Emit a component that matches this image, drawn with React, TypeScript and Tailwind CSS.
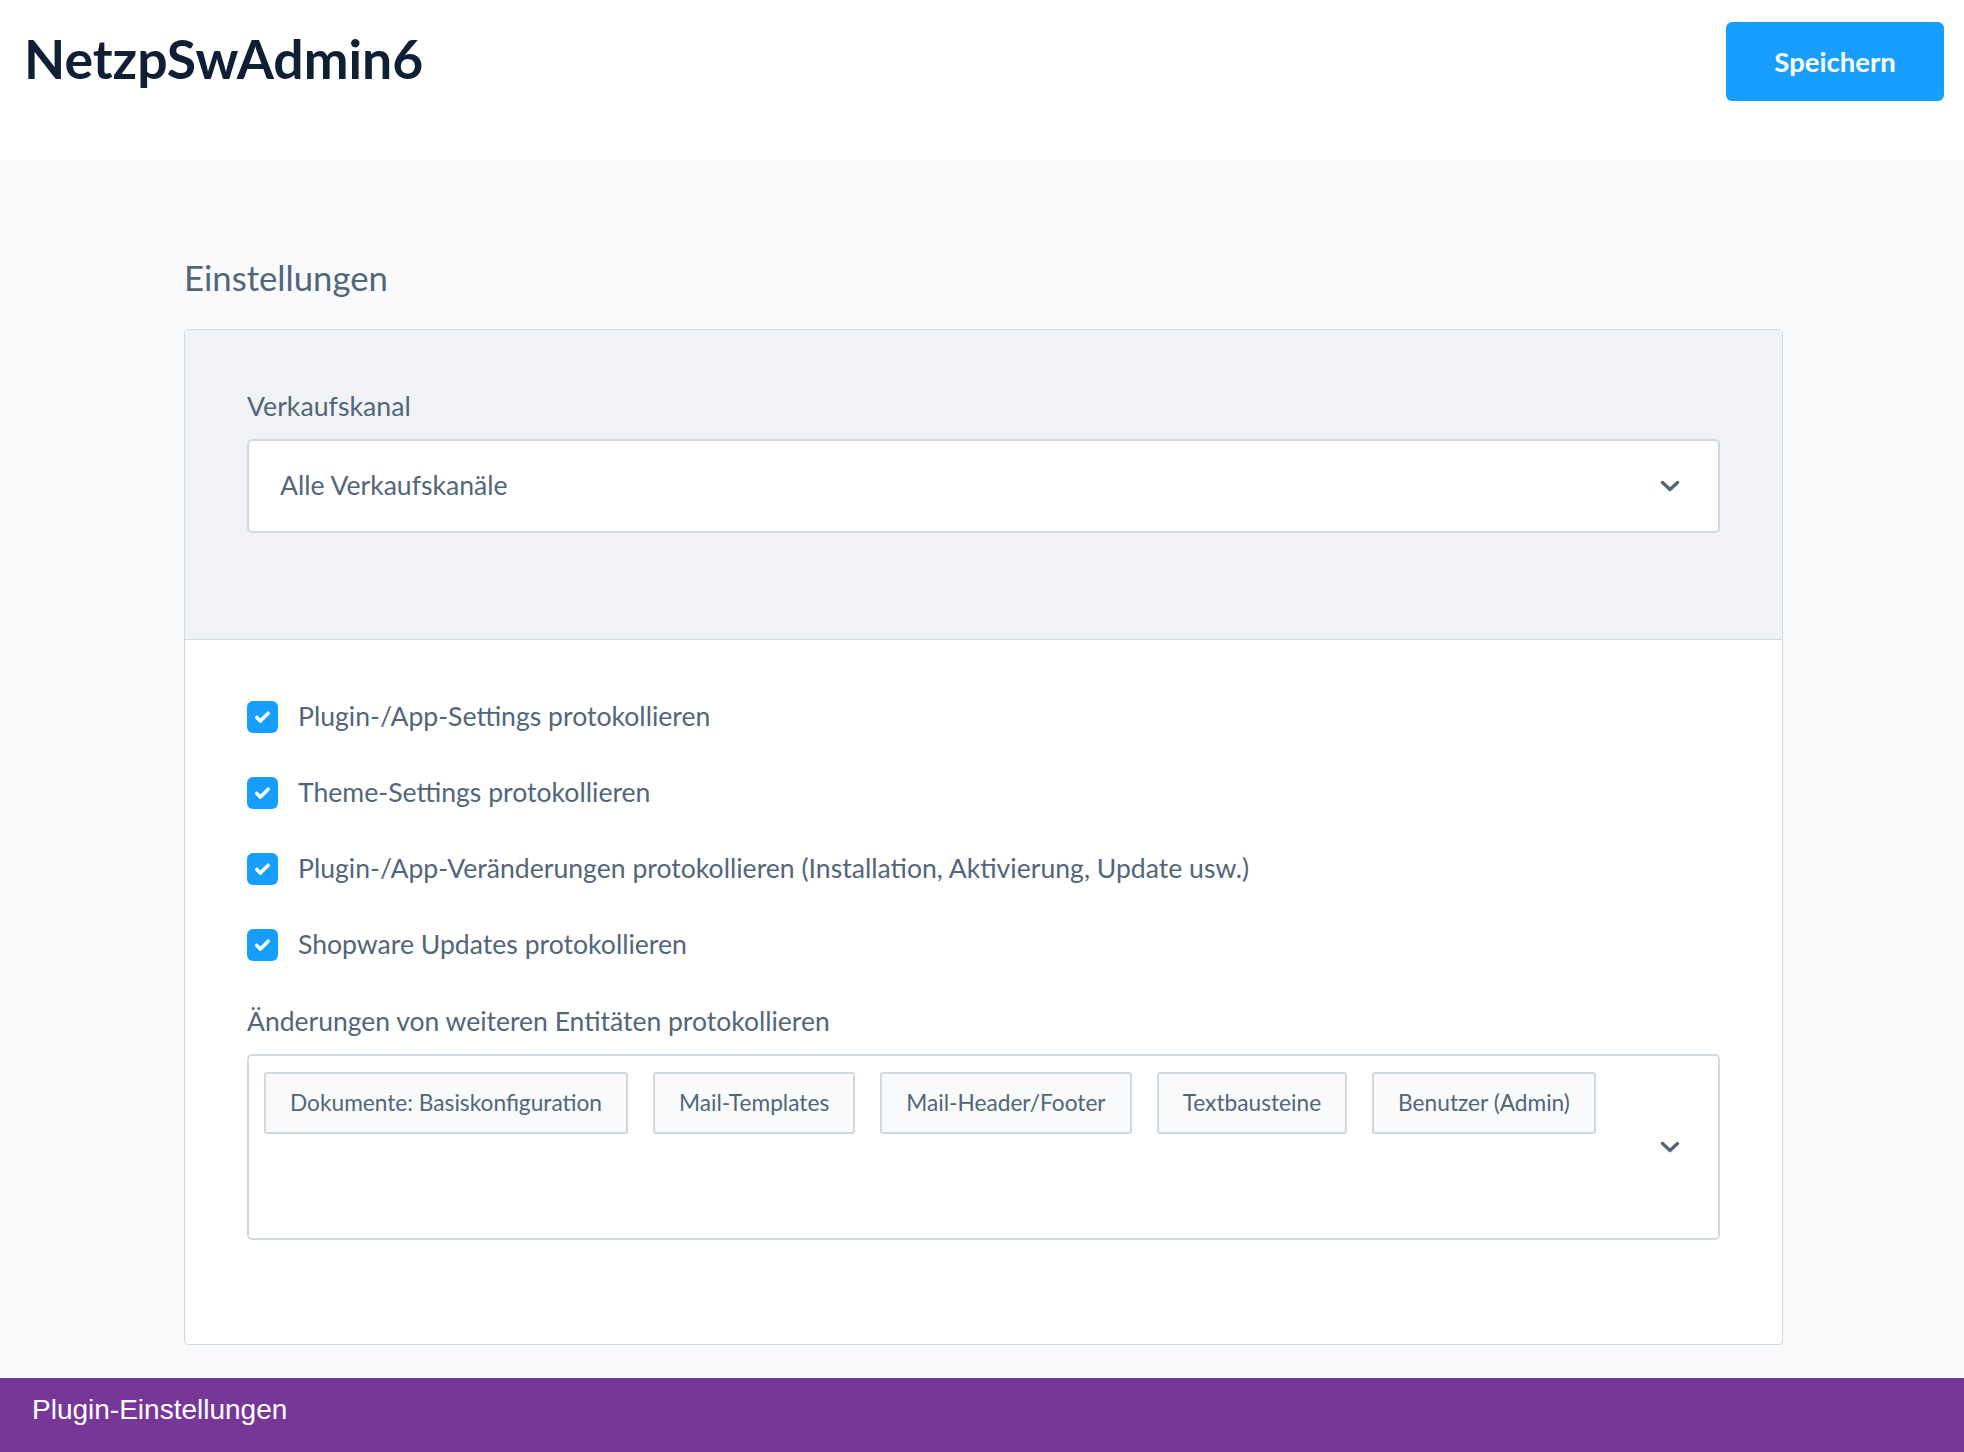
import { Check } from "lucide-react";

const font = "font-['Lato','Noto_Sans',sans-serif]";

const checks = [
  "Plugin-/App-Settings protokollieren",
  "Theme-Settings protokollieren",
  "Plugin-/App-Veränderungen protokollieren (Installation, Aktivierung, Update usw.)",
  "Shopware Updates protokollieren",
];

const tags = [
  "Dokumente: Basiskonfiguration",
  "Mail-Templates",
  "Mail-Header/Footer",
  "Textbausteine",
  "Benutzer (Admin)",
];

const Chevron = () => (
  <svg width="20" height="12" viewBox="0 0 20 12" className="shrink-0">
    <path
      d="M2.5 2.5 L10 9.5 L17.5 2.5"
      fill="none"
      stroke="#52667a"
      strokeWidth="3.4"
      strokeLinecap="round"
      strokeLinejoin="round"
    />
  </svg>
);

const App = () => {
  return (
    <div className={`flex h-[1452px] flex-col ${font}`}>
      <header className="flex h-[160px] shrink-0 items-start justify-between bg-white pl-6 pr-5 pt-[22px]">
        <div className="flex h-[74px] items-center">
          <h1 className="text-[53.5px] leading-none font-bold text-[#0f2036]">
            NetzpSwAdmin6
          </h1>
        </div>
        <button className="h-[79px] w-[218px] rounded-[6px] bg-[#189eff] text-[27.5px] font-bold text-white">
          Speichern
        </button>
      </header>

      <main className="flex-1 bg-[#f9fafb] pl-[184px] pr-[181px] pt-[101px]">
        <h2 className="text-[34.7px] leading-none text-[#52667a]">
          Einstellungen
        </h2>

        <div className="mt-[33px] rounded-[4px] border border-[#d1d9e0] bg-white">
          <div className="border-b border-[#d1d9e0] bg-[#f0f2f5] px-[62px] pb-[106px] pt-[63px]">
            <div className="text-[26.7px] leading-none text-[#52667a]">
              Verkaufskanal
            </div>
            <div className="mt-[20px] flex h-[94px] items-center justify-between rounded-[5px] border-2 border-[#d1d9e0] bg-white pl-[31px] pr-[38px]">
              <span className="text-[26.6px] text-[#52667a]">
                Alle Verkaufskanäle
              </span>
              <Chevron />
            </div>
          </div>

          <div className="px-[62px] pb-[104px] pt-[61px]">
            <div className="flex flex-col gap-[44px]">
              {checks.map((c) => (
                <div key={c} className="flex h-[32px] items-center gap-[20px]">
                  <div className="flex h-[32px] w-[31px] items-center justify-center rounded-[6px] bg-[#189eff]">
                    <Check size={17} strokeWidth={5} color="white" />
                  </div>
                  <span className="text-[26.6px] text-[#52667a]">{c}</span>
                </div>
              ))}
            </div>

            <div className="mt-[47px] text-[26.5px] leading-none text-[#52667a]">
              Änderungen von weiteren Entitäten protokollieren
            </div>
            <div className="mt-[19px] flex h-[186px] items-center justify-between rounded-[5px] border-2 border-[#d1d9e0] bg-white pl-[15px] pr-[38px]">
              <div className="flex flex-wrap gap-[25px] self-start pt-[16px]">
                {tags.map((t) => (
                  <div
                    key={t}
                    className="flex h-[62px] items-center rounded-[3px] border-2 border-[#d1d9e0] bg-[#f9fafb] px-[24px] text-[22.7px] text-[#52667a]"
                  >
                    {t}
                  </div>
                ))}
              </div>
              <Chevron />
            </div>
          </div>
        </div>
      </main>

      <footer className="h-[74px] shrink-0 bg-[#773799] pl-[32px] pt-[18px]">
        <span className="font-['Liberation_Sans',Arial,sans-serif] text-[28px] leading-none text-white">
          Plugin-Einstellungen
        </span>
      </footer>
    </div>
  );
};

export default App;
